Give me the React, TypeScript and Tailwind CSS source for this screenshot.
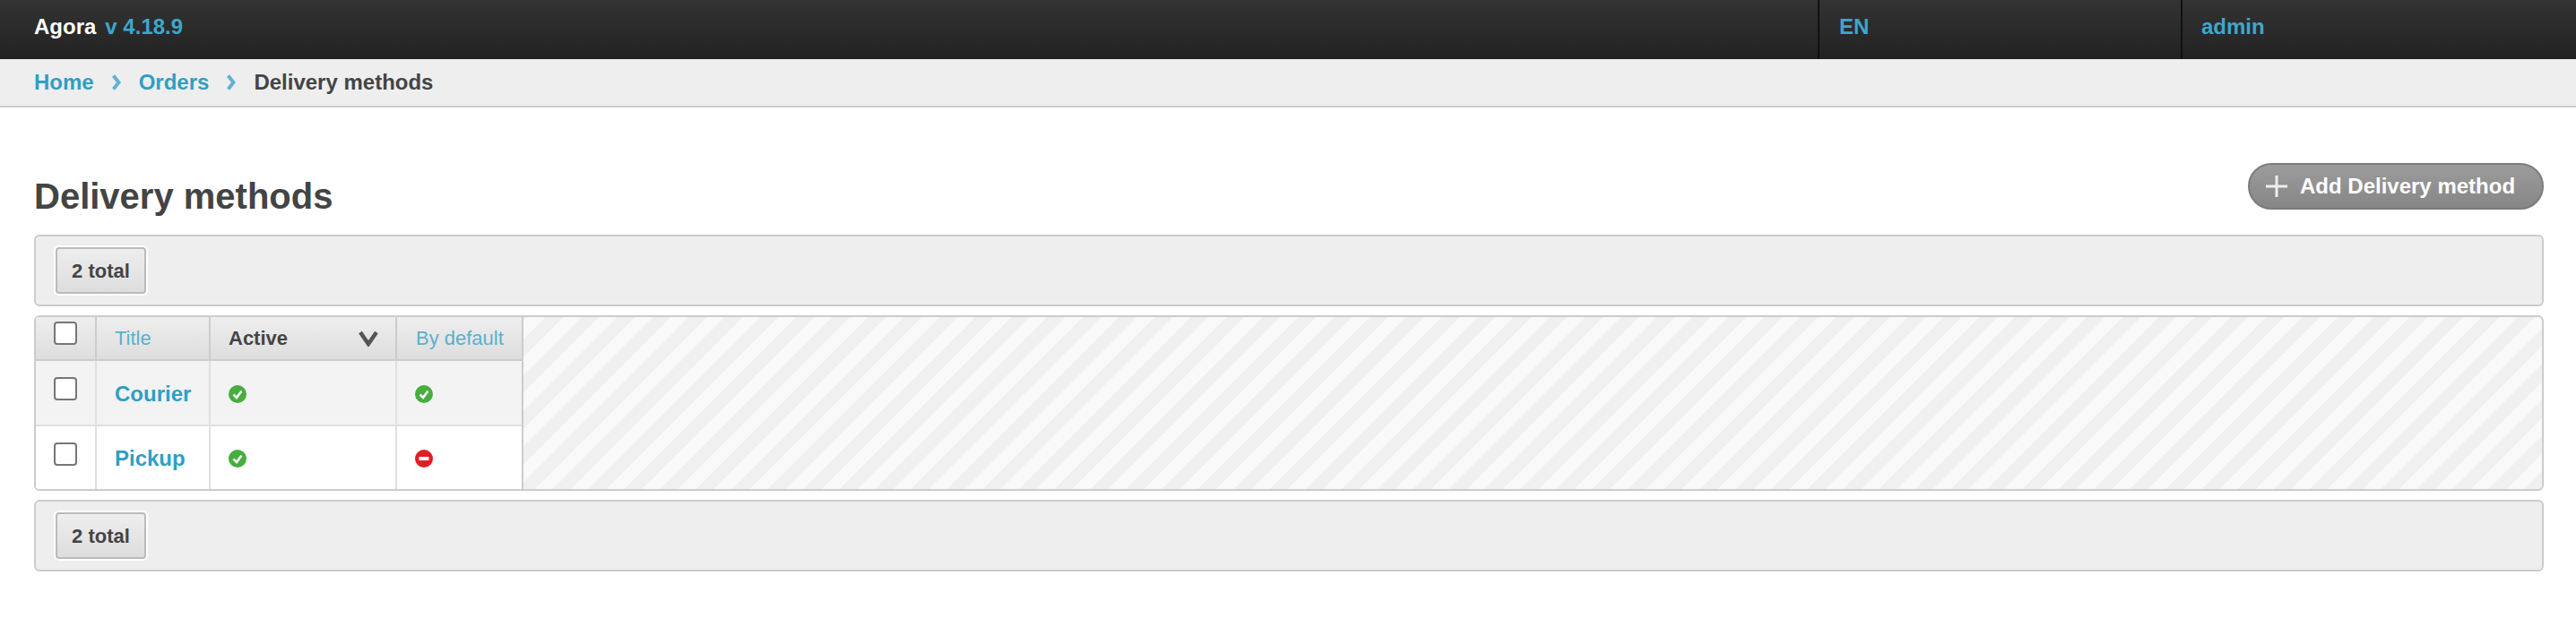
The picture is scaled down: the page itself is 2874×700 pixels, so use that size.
const Chevron = () => (
  <svg width="10" height="18" viewBox="0 0 10 18" fill="none" className="mx-[20px]">
    <path d="M1.5 1.5 7.5 9l-6 7.5" stroke="#62b2d2" strokeWidth="4" />
  </svg>
);

const YesIcon = () => (
  <svg width="20" height="20" viewBox="0 0 20 20" className="mt-[2px] block">
    <circle cx="10" cy="10" r="10" fill="#47ad3e" />
    <path d="M5.5 10.5 9 14l5.5-7.5" fill="none" stroke="#fff" strokeWidth="2.6" />
  </svg>
);

const NoIcon = () => (
  <svg width="20" height="20" viewBox="0 0 20 20" className="mt-[2px] block">
    <circle cx="10" cy="10" r="10" fill="#df1f26" />
    <rect x="4.5" y="8" width="11" height="4" fill="#fff" />
  </svg>
);

const TotalBar = () => (
  <div className="h-20 rounded-[6px] border-2 border-[#ccc] bg-[#eee] px-[22px] pt-3">
    <button className="flex h-[52px] w-[101px] items-center justify-center rounded-[4px] border-2 border-[#bbb] bg-linear-to-b from-[#eee] to-[#ddd] text-[22px] font-bold text-[#444] shadow-[0_0_0_2px_#fff]">
      2 total
    </button>
  </div>
);

const Checkbox = () => (
  <input
    type="checkbox"
    className="block h-[26px] w-[26px] appearance-none rounded-[4px] border-2 border-[#767676] bg-white"
  />
);

const rows = [
  { title: "Courier", active: true, byDefault: true, bg: "bg-[#f3f3f3]", h: "h-[73px]", border: "border-b-2" },
  { title: "Pickup", active: true, byDefault: false, bg: "bg-white", h: "h-[70px]", border: "" },
];

export default function App() {
  return (
    <div className="min-h-[700px] bg-white font-['Liberation_Sans',Arial,sans-serif] text-[#444]">
      {/* Top bar */}
      <div className="flex h-[66px] bg-linear-to-b from-[#333] to-[#222] text-2xl leading-[60px] font-bold">
        <div className="flex-1 pl-[38px]">
          <span className="text-white">Agora</span>
          <span className="ml-[10px] text-[#3fa6cc]">v 4.18.9</span>
        </div>
        <div className="h-full w-[405px] border-l-2 border-[#111] pl-[22px] text-[#3fa6cc]">EN</div>
        <div className="h-full w-[441px] border-l-2 border-[#111] pl-[21px] text-[#3fa6cc]">admin</div>
      </div>

      {/* Breadcrumbs */}
      <div className="flex h-[54px] items-center border-b-2 border-[#ccc] bg-[#eee] pl-[38px] text-2xl font-bold">
        <a className="text-[#2e9fc4]">Home</a>
        <Chevron />
        <a className="text-[#2e9fc4]">Orders</a>
        <Chevron />
        <span>Delivery methods</span>
      </div>

      <div className="pl-[38px] pr-[36px]">
        <div className="flex h-[142px] items-start justify-between pt-[62px]">
          <h1 className="mt-[14px] text-[40px] leading-[46px] font-bold">Delivery methods</h1>
          <button className="flex h-[52px] w-[330px] items-center rounded-full border-2 border-[#7c7c7c] bg-linear-to-b from-[#9c9c9c] to-[#868686] pl-[18px] text-2xl font-bold text-white">
            <svg width="24" height="24" viewBox="0 0 24 24" className="mr-[14px]">
              <path d="M12 0v24M0 12h24" stroke="#eee" strokeWidth="3" />
            </svg>
            Add Delivery method
          </button>
        </div>

        <TotalBar />

        {/* Table on a striped ground */}
        <div className="my-[10px] h-[196px] overflow-hidden rounded-[6px] border-2 border-[#ccc] bg-[repeating-linear-gradient(-45deg,#f0f0f0_0,#f0f0f0_14.142px,#f9f9f9_14.142px,#f9f9f9_28.284px)]">
          <table className="w-[544px] table-fixed border-separate border-spacing-0 border-r-2 border-[#ccc] bg-white">
            <colgroup>
              <col className="w-[68px]" />
              <col className="w-[127px]" />
              <col className="w-[208px]" />
              <col />
            </colgroup>
            <thead>
              <tr className="h-[49px] bg-linear-to-b from-[#eee] to-[#ddd] text-[22px]">
                <th className="border-r-2 border-b-2 border-[#ccc] pt-[5px] pl-[20px] align-top">
                  <Checkbox />
                </th>
                <th className="border-r-2 border-b-2 border-[#ccc] pl-[20px] text-left font-normal text-[#5bb0cf]">Title</th>
                <th className="border-r-2 border-b-2 border-[#ccc] pl-[20px] text-left font-bold">
                  <div className="flex items-center justify-between pr-[19px]">
                    Active
                    <svg width="22" height="18" viewBox="0 0 22 18" fill="none">
                      <path d="M2 2l9 13 9-13" stroke="#555" strokeWidth="4.5" />
                    </svg>
                  </div>
                </th>
                <th className="border-b-2 border-[#ccc] pl-[21px] text-left font-normal text-[#5bb0cf]">By default</th>
              </tr>
            </thead>
            <tbody>
              {rows.map((row) => (
                <tr key={row.title} className={`${row.bg} ${row.h}`}>
                  <td className={`${row.border} border-r-2 border-[#e0e0e0] pt-[18px] pl-[20px] align-top`}>
                    <Checkbox />
                  </td>
                  <td className={`${row.border} border-r-2 border-[#e0e0e0] pt-[2px] pl-[20px] text-2xl font-bold text-[#2e9fc4]`}>
                    {row.title}
                  </td>
                  <td className={`${row.border} border-r-2 border-[#e0e0e0] pl-[20px]`}>
                    {row.active ? <YesIcon /> : <NoIcon />}
                  </td>
                  <td className={`${row.border} border-[#e0e0e0] pl-[20px]`}>
                    {row.byDefault ? <YesIcon /> : <NoIcon />}
                  </td>
                </tr>
              ))}
            </tbody>
          </table>
        </div>

        <TotalBar />
      </div>
    </div>
  );
}
